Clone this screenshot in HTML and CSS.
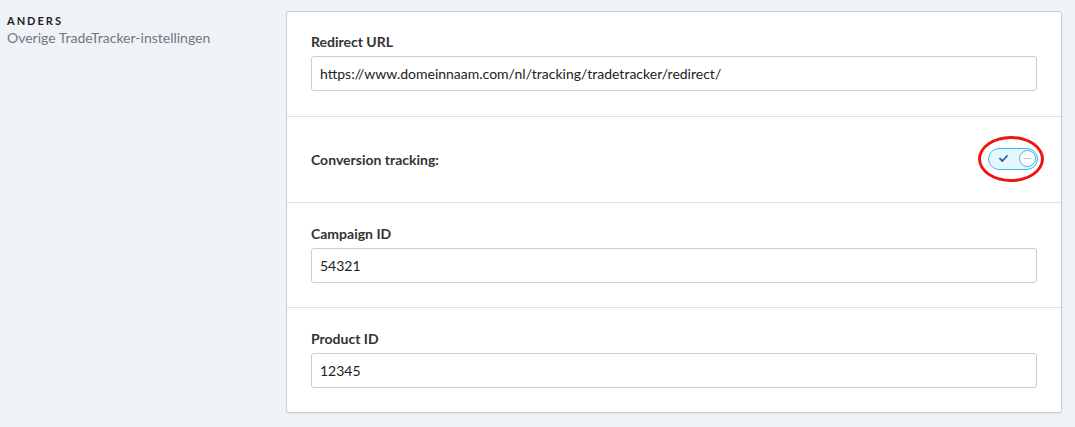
FILE: index.html
```html
<!DOCTYPE html>
<html lang="nl">
<head>
<meta charset="utf-8">
<title>TradeTracker</title>
<link rel="stylesheet" href="styles.css">
</head>
<body>
<div class="page">
  <aside class="side">
    <div class="side-title">ANDERS</div>
    <div class="side-sub">Overige TradeTracker-instellingen</div>
  </aside>
  <main class="card">
    <section class="field">
      <label class="label">Redirect URL</label>
      <div class="input">https://www.domeinnaam.com/nl/tracking/tradetracker/redirect/</div>
    </section>
    <section class="field row">
      <span class="label">Conversion tracking:</span>
      <span class="toggle-wrap">
        <span class="toggle">
          <svg class="check" width="9" height="7" viewBox="0 0 9 7"><path d="M1 3.6 L3.4 6 L8 1" fill="none" stroke="#1f5fa8" stroke-width="1.8" stroke-linecap="round" stroke-linejoin="round"/></svg>
          <span class="knob"><span class="dots"></span></span>
        </span>
        <span class="ring"></span>
      </span>
    </section>
    <section class="field">
      <label class="label">Campaign ID</label>
      <div class="input">54321</div>
    </section>
    <section class="field">
      <label class="label">Product ID</label>
      <div class="input">12345</div>
    </section>
  </main>
</div>
</body>
</html>
```
FILE: styles.css
```css
* { box-sizing: border-box; }
html, body { margin: 0; padding: 0; }
body {
  background: #eff2f6;
  font-family: Lato, "Open Sans", "Liberation Sans", sans-serif;
  color: #333;
  width: 1075px;
  height: 427px;
  overflow: hidden;
}
.page {
  display: flex;
  padding: 11px 13px 0 7px;
}
.side {
  width: 279px;
  flex: none;
  padding-top: 3px;
}
.side-title {
  font-size: 11px;
  font-weight: 700;
  letter-spacing: 2px;
  color: #222;
  line-height: 14px;
}
.side-sub {
  font-size: 14px;
  color: #6e7a82;
  line-height: 18px;
  margin-top: 1px;
}
.card {
  flex: 1;
  background: #fff;
  border: 1px solid #c9cdcd;
  border-radius: 3px;
  box-shadow: 0 1px 1px rgba(0,0,0,0.04);
}
.field {
  padding: 22px 24px 24px;
  border-top: 1px solid #dfe2e3;
}
.field:first-child { border-top: none; padding-top: 21px; padding-bottom: 25px; }
.label {
  display: block;
  font-size: 14px;
  font-weight: 700;
  color: #333;
  line-height: 17px;
  margin-bottom: 6px;
}
.input {
  height: 35px;
  border: 1px solid #c9cdcd;
  border-radius: 3px;
  padding: 0 8px;
  display: flex;
  align-items: center;
  font-size: 14px;
  color: #222;
}
.row {
  display: flex;
  align-items: center;
  justify-content: space-between;
  height: 86px;
  padding: 0 23px 0 24px;
}
.row .label { margin: 0; }
.toggle-wrap {
  position: relative;
  display: inline-block;
  width: 50px;
  height: 22px;
  margin-top: -2px;
}
.toggle {
  position: absolute;
  inset: 0;
  background: #e6f6fd;
  border: 1.5px solid #3cb8f0;
  border-radius: 11px;
  display: flex;
  align-items: center;
}
.check { margin-left: 10px; }
.knob {
  position: absolute;
  right: 1px;
  top: 1px;
  width: 17px;
  height: 17px;
  border-radius: 50%;
  background: #fff;
  border: 1.5px solid #3cb8f0;
  display: flex;
  align-items: center;
  justify-content: center;
}
.dots {
  width: 7px;
  height: 1px;
  background-image: radial-gradient(circle, #b8c4ca 0.6px, transparent 0.8px);
  background-size: 2px 1px;
}
.ring {
  position: absolute;
  left: -10px;
  top: -12px;
  width: 66px;
  height: 46px;
  border: 3px solid #f01410;
  border-radius: 50%;
}
```
